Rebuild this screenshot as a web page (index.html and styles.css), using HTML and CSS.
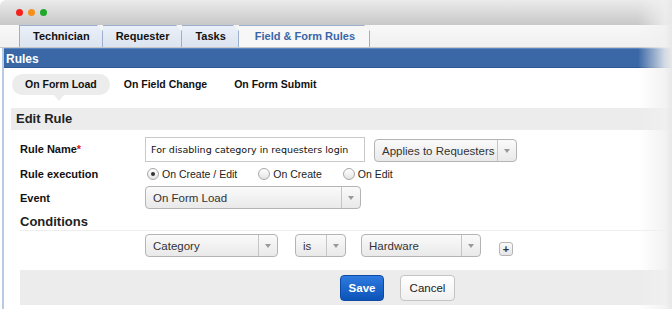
FILE: index.html
```html
<!DOCTYPE html>
<html lang="en">
<head>
    <meta charset="UTF-8" />
    <title>Field &amp; Form Rules</title>
    <link rel="stylesheet" href="styles.css">
</head>
<body>
<div class="window">
    <div class="titlebar">
        <span class="light red"></span>
        <span class="light orange"></span>
        <span class="light green"></span>
    </div>

    <nav class="tabbar">
        <a class="tab" href="#">Technician</a>
        <a class="tab" href="#">Requester</a>
        <a class="tab" href="#">Tasks</a>
        <a class="tab active" href="#">Field &amp; Form Rules</a>
    </nav>

    <div class="panel">
        <div class="panel-head">Rules</div>

        <div class="subtabs">
            <a class="subtab active" href="#">On Form Load</a>
            <a class="subtab" href="#">On Field Change</a>
            <a class="subtab" href="#">On Form Submit</a>
        </div>

        <div class="section-head">Edit Rule</div>

        <form class="rule-form">
            <div class="row row-name">
                <label class="label">Rule Name<span class="req">*</span></label>
                <div class="field">
                    <input class="text" type="text" value="For disabling category in requesters login">
                    <div class="select w-applies"><span>Applies to Requesters</span><i></i></div>
                </div>
            </div>
            <div class="row row-exec">
                <label class="label">Rule execution</label>
                <div class="field radios">
                    <span class="radio checked"></span><span class="radio-text">On Create / Edit</span>
                    <span class="radio"></span><span class="radio-text">On Create</span>
                    <span class="radio"></span><span class="radio-text">On Edit</span>
                </div>
            </div>
            <div class="row row-event">
                <label class="label">Event</label>
                <div class="field">
                    <div class="select w-event"><span>On Form Load</span><i></i></div>
                </div>
            </div>

            <div class="conditions-head">Conditions</div>

            <div class="row row-cond">
                <div class="label"></div>
                <div class="field">
                    <div class="select w-cat"><span>Category</span><i></i></div>
                    <div class="select w-is"><span>is</span><i></i></div>
                    <div class="select w-hw"><span>Hardware</span><i></i></div>
                    <button class="plus" type="button">+</button>
                </div>
            </div>

            <div class="footer">
                <button class="btn save" type="button">Save</button>
                <button class="btn cancel" type="button">Cancel</button>
            </div>
        </form>
    </div>

    <div class="fade"></div>
</div>
</body>
</html>
```

FILE: styles.css
```css
body {
    margin: 0;
    background: #ffffff;
    font-family: 'Liberation Sans', Arial, sans-serif;
    color: #111;
}

.window {
    position: relative;
    width: 672px;
    height: 309px;
    overflow: hidden;
    background: #ffffff;
}

.titlebar {
    height: 25px;
    background: linear-gradient(#ebebeb, #c8c8c8);
    border-radius: 6px 6px 0 0;
    display: flex;
    align-items: center;
    gap: 5px;
    padding-left: 16px;
    box-sizing: border-box;
}

.light {
    width: 7px;
    height: 7px;
    border-radius: 50%;
}

.red { background: #f5221c; }
.orange { background: #f5901c; }
.green { background: #1fa82a; }

.tabbar {
    height: 23px;
    background: linear-gradient(#f8f8f8, #f0f0f0);
    border-bottom: 1px solid #c6c6c6;
    box-sizing: border-box;
    display: flex;
    align-items: flex-end;
    padding-left: 19px;
}

.tab {
    position: relative;
    height: 21px;
    line-height: 21px;
    padding: 0 12px 0 13px;
    background: linear-gradient(#eaf0f8, #dce4ef);
    border: 1px solid #9bb0cf;
    border-bottom: none;
    border-left: none;
    font-size: 11px;
    font-weight: bold;
    color: #111;
    text-decoration: none;
}

.tab:first-child {
    border-left: 1px solid #9bb0cf;
}

.tab::after {
    content: "";
    position: absolute;
    top: -1px;
    right: -1px;
    border-top: 6px solid #f5f5f5;
    border-left: 6px solid transparent;
}

.tab.active {
    background: #f7f7f7;
    color: #3b66a8;
    padding: 0 14px 0 16px;
}

.panel {
    margin-left: 2px;
    border-left: 2px solid #b7cbe6;
    height: 262px;
}

.panel-head {
    height: 20px;
    line-height: 20px;
    background: #3a68a6;
    border-top: 1px solid #5b86bf;
    border-bottom: 1px solid #2c5790;
    box-sizing: border-box;
    color: #fff;
    font-size: 12px;
    font-weight: bold;
    padding-left: 2px;
}

.subtabs {
    height: 40px;
    display: flex;
    align-items: flex-start;
    padding: 6px 0 0 8px;
    box-sizing: border-box;
}

.subtab {
    position: relative;
    height: 21px;
    line-height: 21px;
    padding: 0 13px;
    border-radius: 11px;
    font-size: 10.5px;
    font-weight: bold;
    color: #111;
    text-decoration: none;
}

.subtab + .subtab {
    margin-left: 1px;
}

.subtab.active {
    background: #ececec;
}

.subtab.active::after {
    content: "";
    position: absolute;
    left: 42px;
    bottom: -6px;
    border-top: 6px solid #ececec;
    border-left: 5px solid transparent;
    border-right: 5px solid transparent;
}

.section-head {
    margin-left: 7px;
    height: 22px;
    line-height: 22px;
    background: #ececec;
    font-size: 13px;
    font-weight: bold;
    padding-left: 5px;
    color: #222;
}

.rule-form {
    padding-left: 16px;
    padding-top: 6px;
}

.row {
    display: grid;
    grid-template-columns: 125px 1fr;
    align-items: center;
}

.label {
    font-size: 11px;
    font-weight: bold;
    color: #111;
}

.req {
    color: #e01010;
}

.field {
    display: flex;
    align-items: center;
}

.row-name { height: 25px; }
.row-exec { height: 14px; margin-top: 6px; }
.row-event { height: 23px; margin-top: 5px; }

.text {
    width: 220px;
    height: 25px;
    box-sizing: border-box;
    border: 1px solid #c9c9c9;
    padding: 0 5px;
    font-family: 'DejaVu Sans', sans-serif;
    font-size: 9.5px;
    color: #111;
    margin: 0;
}

.select {
    height: 23px;
    box-sizing: border-box;
    border: 1px solid #b4b4b4;
    border-radius: 4px;
    background: linear-gradient(#fafafa, #e9e9e9);
    display: flex;
    align-items: center;
    font-size: 11.5px;
    color: #333;
}

.select span {
    flex: 1;
    padding-left: 7px;
    white-space: nowrap;
}

.select i {
    width: 18px;
    height: 100%;
    border-left: 1px solid #c6c6c6;
    position: relative;
}

.select i::after {
    content: "";
    position: absolute;
    left: 6px;
    top: 9px;
    border-top: 4px solid #999;
    border-left: 3px solid transparent;
    border-right: 3px solid transparent;
}

.w-applies { width: 143px; margin-left: 9px; margin-top: 3px; }
.w-event { width: 216px; }
.w-cat { width: 133px; }
.w-is { width: 51px; margin-left: 17px; }
.w-hw { width: 120px; margin-left: 15px; }

.radios {
    font-size: 10.5px;
    color: #222;
}

.radio {
    width: 10px;
    height: 10px;
    border: 1px solid #a8a8a8;
    border-radius: 50%;
    background: linear-gradient(#ffffff, #e4e4e4);
    margin-left: 2px;
    margin-right: 3px;
    position: relative;
}

.radio.checked::after {
    content: "";
    position: absolute;
    left: 3px;
    top: 3px;
    width: 4px;
    height: 4px;
    border-radius: 50%;
    background: #333;
}

.radio-text {
    margin-right: 19px;
}

.conditions-head {
    margin-top: 5px;
    font-size: 13px;
    font-weight: bold;
    color: #222;
    padding: 0 0 1px 0;
    border-bottom: 1px solid #eeeeee;
}

.row-cond {
    height: 23px;
    margin-top: 3px;
}

.plus {
    align-self: flex-end;
    width: 14px;
    height: 14px;
    margin: 0 0 1px 18px;
    padding: 0;
    border: 1px solid #b4b4b4;
    border-radius: 3px;
    background: linear-gradient(#fafafa, #e6e6e6);
    font-size: 11px;
    font-weight: bold;
    line-height: 11px;
    color: #333;
    font-family: inherit;
}

.footer {
    margin-top: 13px;
    height: 35px;
    background: #ececec;
    display: flex;
    align-items: center;
    padding-left: 320px;
    gap: 16px;
}

.btn {
    height: 26px;
    border-radius: 4px;
    font-family: inherit;
    font-size: 11.5px;
    padding: 0;
    cursor: pointer;
}

.save {
    width: 44px;
    background: linear-gradient(#2f7be0, #0c53b8);
    border: 1px solid #0c4aa4;
    color: #fff;
    font-weight: bold;
}

.cancel {
    width: 55px;
    background: linear-gradient(#ffffff, #f0f0f0);
    border: 1px solid #c4c4c4;
    color: #222;
}

.fade {
    position: absolute;
    top: 0;
    right: 0;
    width: 34px;
    height: 309px;
    background: linear-gradient(to right, rgba(245,245,245,0), rgba(240,240,240,0.85) 80%, rgba(232,232,232,1));
}
```
